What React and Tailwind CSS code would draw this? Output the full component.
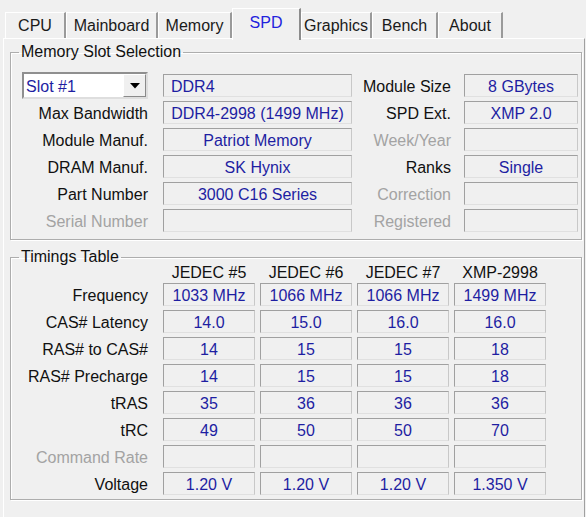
import React from "react";

const FONT = { fontFamily: '"Liberation Sans", Arial, sans-serif' };

const fieldBorder =
  "border border-t-[#a0a0a0] border-l-[#a0a0a0] border-r-[#c8c8c8] border-b-[#e0e0e0]";

function Field({ children, left = false }) {
  return (
    <div
      className={`h-[23px] pt-[2px] flex items-center ${
        left ? "justify-start pl-[7px]" : "justify-center"
      } ${fieldBorder} text-[#1e1ea2] whitespace-nowrap leading-none`}
    >
      {children}
    </div>
  );
}

function Label({ children, dim = false, className = "" }) {
  return (
    <div
      className={`text-right pt-[2px] whitespace-nowrap leading-none ${
        dim ? "text-[#a3a3a3]" : "text-[#111]"
      } ${className}`}
    >
      {children}
    </div>
  );
}

function Tab({ label, w, selected = false }) {
  if (selected) {
    return (
      <div
        className={`${w} h-[32px] -mb-[2px] relative z-10 bg-[#f0f0f0] border-l border-t border-l-white border-t-white border-r-2 border-r-[#8c8c8c] flex items-center justify-center pb-[3px] text-[#2222dd]`}
      >
        {label}
      </div>
    );
  }
  return (
    <div
      className={`${w} h-[26px] border-l border-t border-l-white border-t-white border-r-2 border-r-[#9a9a9a] flex items-center justify-center text-[#1a1a1a]`}
    >
      {label}
    </div>
  );
}

function Combo() {
  return (
    <div className="h-[27px] w-[126px] bg-white border-2 border-t-[#8f8f8f] border-l-[#8f8f8f] border-r-[#dedede] border-b-[#dedede] flex items-center">
      <span className="flex-1 pl-[2px] pt-[2px] text-[#1e1ea2] leading-none">Slot #1</span>
      <div className="w-[23px] h-[23px] bg-[#f0f0f0] border border-t-white border-l-white border-r-[#8a8a8a] border-b-[#8a8a8a] flex items-center justify-center">
        <svg width="10" height="6" viewBox="0 0 10 6">
          <polygon points="0,0 10,0 5,5.5" fill="#000" />
        </svg>
      </div>
    </div>
  );
}

function Row1({ children }) {
  return (
    <div className="h-[27px] grid grid-cols-[126px_15px_189px_112px_114px] items-center">
      {children}
    </div>
  );
}

export default function App() {
  const slotRows = [
    { l: "Max Bandwidth", v: "DDR4-2998 (1499 MHz)", rl: "SPD Ext.", rv: "XMP 2.0" },
    { l: "Module Manuf.", v: "Patriot Memory", rl: "Week/Year", rdim: true, rv: "" },
    { l: "DRAM Manuf.", v: "SK Hynix", rl: "Ranks", rv: "Single" },
    { l: "Part Number", v: "3000 C16 Series", rl: "Correction", rdim: true, rv: "" },
    { l: "Serial Number", dim: true, v: "", rl: "Registered", rdim: true, rv: "" },
  ];

  const timing = [
    { l: "Frequency", v: ["1033 MHz", "1066 MHz", "1066 MHz", "1499 MHz"] },
    { l: "CAS# Latency", v: ["14.0", "15.0", "16.0", "16.0"] },
    { l: "RAS# to CAS#", v: ["14", "15", "15", "18"] },
    { l: "RAS# Precharge", v: ["14", "15", "15", "18"] },
    { l: "tRAS", v: ["35", "36", "36", "36"] },
    { l: "tRC", v: ["49", "50", "50", "70"] },
    { l: "Command Rate", dim: true, v: ["", "", "", ""] },
    { l: "Voltage", v: ["1.20 V", "1.20 V", "1.20 V", "1.350 V"] },
  ];

  const groupBox =
    "w-[572px] border border-[#adadad] shadow-[inset_1px_1px_0_#ffffff,1px_1px_0_#ffffff] rounded-none";

  return (
    <div
      className="w-[586px] h-[517px] bg-[#f0f0f0] overflow-hidden text-[16px]"
      style={FONT}
    >
      {/* Tabs */}
      <div className="pt-[8px] pl-[5px] h-[38px] flex items-end">
        <Tab label="CPU" w="w-[61px]" />
        <Tab label="Mainboard" w="w-[92px]" />
        <Tab label="Memory" w="w-[74px]" />
        <Tab label="SPD" w="w-[69px]" selected />
        <Tab label="Graphics" w="w-[71px]" />
        <Tab label="Bench" w="w-[66px]" />
        <Tab label="About" w="w-[65px]" />
      </div>

      {/* Panel */}
      <div className="ml-[3px] w-[582px] h-[479px] border-l border-t border-l-white border-t-white border-r border-r-[#a0a0a0] pl-[6px]">
        {/* Memory Slot Selection */}
        <fieldset className={`${groupBox} mt-[4px] pl-[11px] pt-[11px] pb-[5px]`}>
          <legend className="-ml-[3px] px-[2px] leading-[18px] text-[#111]">
            Memory Slot Selection
          </legend>
          <Row1>
            <Combo />
            <div />
            <Field left>DDR4</Field>
            <Label className="pr-[13px]">Module Size</Label>
            <Field>8 GBytes</Field>
          </Row1>
          {slotRows.map((r) => (
            <Row1 key={r.l}>
              <Label dim={r.dim}>{r.l}</Label>
              <div />
              <Field>{r.v}</Field>
              <Label dim={r.rdim} className="pr-[13px]">
                {r.rl}
              </Label>
              <Field>{r.rv}</Field>
            </Row1>
          ))}
        </fieldset>

        {/* Timings Table */}
        <fieldset className={`${groupBox} mt-[9px] pl-[11px] pb-[2px]`}>
          <legend className="-ml-[3px] px-[2px] leading-[16px] text-[#111]">
            Timings Table
          </legend>
          <div className="h-[16px] flex items-center">
            <div className="w-[126px]" />
            <div className="ml-[15px] grid grid-cols-[92px_92px_92px_92px] gap-x-[5px]">
              {["JEDEC #5", "JEDEC #6", "JEDEC #7", "XMP-2998"].map((h) => (
                <div
                  key={h}
                  className="text-center leading-none text-[#111] whitespace-nowrap"
                >
                  {h}
                </div>
              ))}
            </div>
          </div>
          {timing.map((r) => (
            <div key={r.l} className="h-[27px] flex items-center">
              <Label dim={r.dim} className="w-[126px]">
                {r.l}
              </Label>
              <div className="ml-[15px] grid grid-cols-[92px_92px_92px_92px] gap-x-[5px]">
                {r.v.map((v, i) => (
                  <Field key={i}>{v}</Field>
                ))}
              </div>
            </div>
          ))}
        </fieldset>
      </div>
    </div>
  );
}
